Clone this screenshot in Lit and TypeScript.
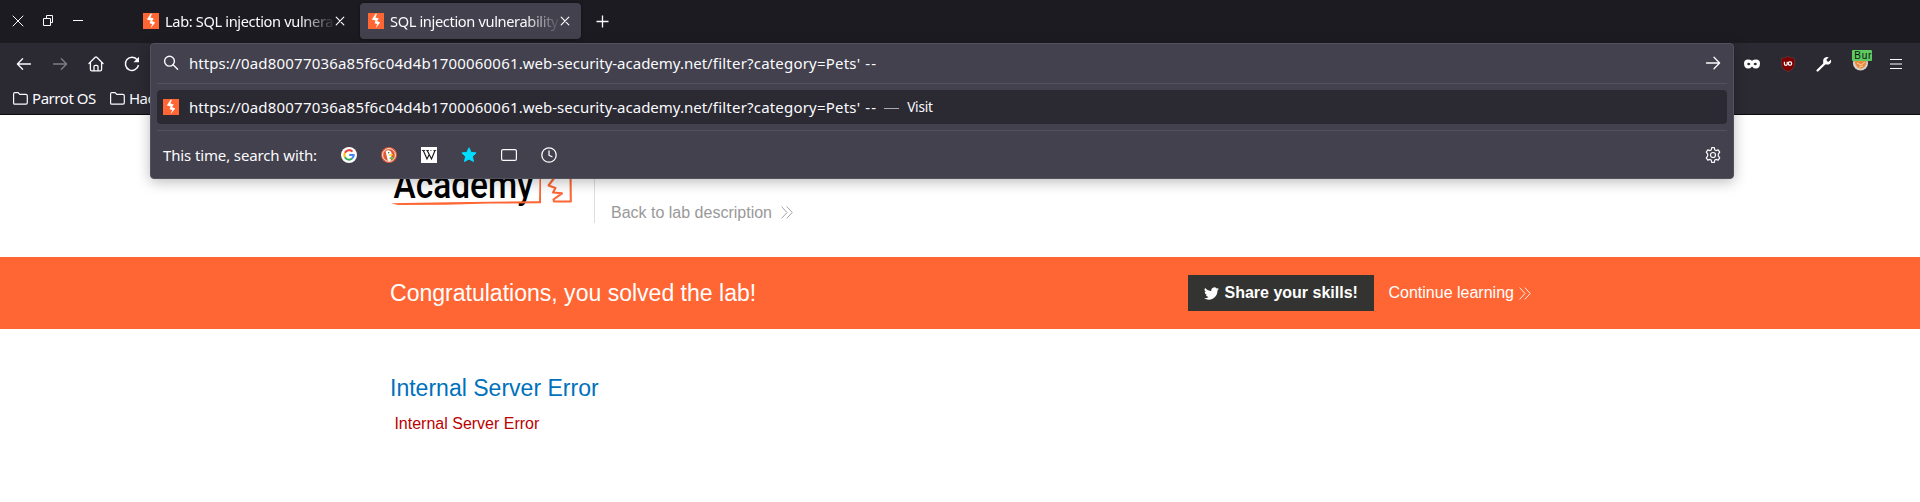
import { LitElement, html, css, svg } from "lit";
import { customElement, property } from "lit/decorators.js";

const stroke = (size: number, body: unknown, w = 1.3) => html`<svg width=${size} height=${size} viewBox="0 0 16 16" fill="none" stroke="currentColor" stroke-width=${w} stroke-linecap="round" stroke-linejoin="round">${body}</svg>`;

const bolt = html`<svg width="16" height="16" viewBox="0 0 16 16"><rect width="16" height="16" fill="#ff6633"/><path d="M7.6 0.8 3.8 6.4 7.6 7.6 6.6 10.2 9.2 11 7.6 15.2 12.2 9.4 9 8 10.8 5.4 7.4 4.6 9 0.8Z" fill="#fff"/></svg>`;
const closeX = stroke(16, svg`<path d="M4.2 4.2l7.6 7.6M11.8 4.2l-7.6 7.6"/>`, 1.2);
const chevrons = html`<svg class="chev" width="12" height="13" viewBox="0 0 12 13" fill="none" stroke="currentColor" stroke-width="0.9"><path d="M.6.6 6 6.5.6 12.4M5.8.6l5.4 5.9-5.4 5.9"/></svg>`;
const folder = html`<svg width="15" height="13" viewBox="0 0 15 13" fill="none" stroke="#fbfbfe" stroke-width="1.2"><path d="M.6 10.9V2Q.6.7 1.9.7h3.2l1.7 1.7h6Q14.3 2.4 14.3 3.8v7Q14.3 12.2 13 12.2H1.9Q.6 12.2.6 10.9Z"/></svg>`;

@customElement("browser-tab")
class BrowserTab extends LitElement {
  @property() label = "";
  @property({ type: Boolean, reflect: true }) active = false;
  static styles = css`
    :host { display: flex; align-items: center; box-sizing: border-box; width: 221px; height: 36px; padding-left: 8px; border-radius: 4px; }
    :host([active]) { background: #42414d; box-shadow: 0 0 3px #0008; }
    svg { display: block; flex: none; }
    .label { width: 169px; margin: 0 -2px 0 6px; overflow: hidden; white-space: nowrap; font-size: 14.6px; letter-spacing: -0.35px; line-height: 22px; -webkit-mask-image: linear-gradient(to right, #000 135px, transparent 171px); mask-image: linear-gradient(to right, #000 135px, transparent 171px); }
  `;
  render() {
    return html`${bolt}<span class="label">${this.label}</span>${closeX}`;
  }
}

@customElement("url-dropdown")
class UrlDropdown extends LitElement {
  static styles = css`
    :host { display: flex; flex-direction: column; box-sizing: border-box; width: 1584px; height: 136px; padding: 0 6px; background: #42414d; border: 1px solid #52525e; border-radius: 4px; box-shadow: 0 3px 14px #0004; }
    svg { display: block; flex: none; }
    .row { display: flex; align-items: center; box-sizing: border-box; padding: 0 6px; white-space: pre; }
    .entry { height: 40px; padding-bottom: 1px; border-bottom: 1px solid #52525e; }
    .hit { height: 34px; margin: 6px 0; background: #2b2a33; border-radius: 4px; }
    .engines { height: 48px; padding-top: 1px; border-top: 1px solid #52525e; }
    .url { margin-left: 10px; }
    .scheme { letter-spacing: 0.03px; }
    .lab-id { letter-spacing: 0.2px; }
    .host { letter-spacing: 0; }
    .path { letter-spacing: 0.2px; }
    .tail { letter-spacing: 1.1px; }
    .with { letter-spacing: -0.13px; }
    .fill { flex: 1; }
    .dash { width: 15px; height: 1px; margin: 3px 8px 0 7px; background: #aaaab2; }
    .visit { font-size: 13.6px; letter-spacing: -0.2px; }
    .list { display: flex; gap: 24px; margin-left: 24px; }
  `;
  render() {
    const url = html`<span class="url"><span class="scheme">https://</span><span class="lab-id">0ad80077036a85f6c04d4b1700060061</span><span class="host">.web-security-academy.net</span><span class="path">/filter?category=Pets'</span><span class="tail"> --</span></span>`;
    return html`
      <div class="row entry">
        ${stroke(16, svg`<circle cx="6.5" cy="6.2" r="4.9"/><path d="M10.1 9.8l4.5 4.5"/>`, 1.4)}
        ${url}<span class="fill"></span>
        ${stroke(16, svg`<path d="M1.5 8h13M9 2.3l5.6 5.7L9 13.7"/>`)}
      </div>
      <div class="row hit">${bolt}${url}<span class="dash"></span><span class="visit">Visit</span></div>
      <div class="row engines">
        <span class="with">This time, search with:</span>
        <div class="list">
          <svg width="16" height="16" viewBox="0 0 16 16"><circle cx="8" cy="8" r="8" fill="#fff"/><g fill="none" stroke-width="2"><path d="M11.5 4.6A4.7 4.7 0 0 0 3.9 5.7" stroke="#ea4335"/><path d="M3.9 5.7A4.7 4.7 0 0 0 3.9 10.3" stroke="#fbbc05"/><path d="M3.9 10.3A4.7 4.7 0 0 0 11 11.6" stroke="#34a853"/><path d="M11 11.6A4.7 4.7 0 0 0 12.7 8H8.2" stroke="#4285f4"/></g></svg>
          <svg width="16" height="16" viewBox="0 0 16 16"><circle cx="8" cy="8" r="8" fill="#de5833"/><circle cx="8" cy="8" r="6.4" fill="none" stroke="#fff" stroke-width=".9"/><path d="M4.600 4.200Q7.400 2.500 9.500 4.200 11 5.500 10.600 8L9.500 13.800Q8 14.200 6.800 13.600L5.200 7Z" fill="#fff"/><path d="M8 7.600q2-.9 4.400-.3-1 1.600-4 1.700Z" fill="#fdd20a"/><path d="M8.400 10.400l3.800-.6v2.800l-3.600-.8Z" fill="#65bc46"/><circle cx="7.700" cy="5.800" r=".7" fill="#33405e"/></svg>
          <svg width="16" height="16" viewBox="0 0 16 16"><rect width="16" height="16" fill="#fff"/><path d="M2.300 3.500 6 12 8.300 7.300M6.200 3.500l4.300 8.500L14 3.500" fill="none" stroke="#111" stroke-width="1.100"/><path d="M.8 3.500h3.400M5.200 3.500h2.800M9.400 3.500h1M12.400 3.500h2.800" stroke="#111" stroke-width=".8"/></svg>
          <svg width="16" height="16" viewBox="0 0 16 16"><path d="M8 .8l2.100 4.600 5 .5-3.700 3.500 1.100 5.100L8 12l-4.500 2.500 1.100-5.100L.9 5.900l5-.5Z" fill="#00ddff" stroke="#00ddff" stroke-linejoin="round"/></svg>
          <svg width="16" height="16" viewBox="0 0 16 16"><rect x=".6" y="2.600" width="14.800" height="10.800" rx="1.500" fill="none" stroke="#fbfbfe" stroke-width="1.200"/></svg>
          ${stroke(16, svg`<circle cx="8" cy="8" r="7.200"/><path d="M8 3.800v4.400l3 1.600"/>`)}
        </div>
        <span class="fill"></span>
        ${stroke(16, svg`<circle cx="8" cy="8" r="2.500"/><path d="M6.700.7h2.600l.5 2.200 1.200.7 2.200-.7 1.500 2.300-1.400 1.900v1.800l1.400 1.900-1.500 2.300-2.200-.7-1.200.7-.5 2.200H6.700l-.5-2.200-1.200-.7-2.200.7-1.500-2.300 1.400-1.900V7.100L1.300 5.200l1.500-2.300 2.200.7 1.200-.7Z"/>`, 1.2)}
      </div>`;
  }
}

@customElement("app-root")
class AppRoot extends LitElement {
  static styles = css`
    :host { display: block; position: relative; height: 502px; overflow: hidden; background: #fff; color: #fbfbfe; font: 15px/22px "Noto Sans", sans-serif; }
    svg { display: block; flex: none; }
    .titlebar { display: flex; box-sizing: border-box; height: 43px; padding: 3px 0 0 10px; background: #1c1b22; }
    .controls { display: flex; align-items: center; gap: 14px; width: 125px; height: 36px; }
    .tabs { display: flex; align-items: center; gap: 4px; height: 36px; }
    .plus { margin-left: 9px; }
    .toolbar { box-sizing: border-box; height: 72px; background: #2b2a33; border-bottom: 1px solid #0c0c0d; }
    .nav { display: flex; align-items: center; justify-content: space-between; height: 42px; padding: 0 16px; }
    .group { display: flex; align-items: center; gap: 20px; height: 41px; margin-bottom: 1px; }
    .burp { margin: 0 -4px 6px 0; }
    .dim { opacity: .4; }
    .marks { display: flex; align-items: center; height: 24px; margin-top: 1px; padding-left: 13px; white-space: nowrap; }
    .marks span { margin: 0 14px 0 4px; letter-spacing: -0.45px; }
    .dropdown { position: absolute; left: 150px; top: 43px; }
    .page { font-family: "Liberation Sans", Arial, sans-serif; }
    .header { display: flex; box-sizing: border-box; height: 142px; padding-left: 390px; }
    .logo { width: 204px; }
    .lab { box-sizing: border-box; height: 108px; padding: 87px 0 0 16px; border-left: 1px solid #ddd; }
    .back { display: flex; align-items: center; gap: 9px; color: #999; font-size: 16px; line-height: 21px; }
    .back .chev { margin-bottom: 1px; }
    .banner { display: flex; align-items: center; height: 72px; padding: 0 389px 0 390px; background: #ff6633; color: #fff; font-size: 16px; }
    .congrats { flex: 1; font-size: 23.04px; }
    .share { display: flex; align-items: center; gap: 5.500px; box-sizing: border-box; width: 186px; height: 36px; margin-right: 14.500px; padding-left: 16px; background: #333332; font-weight: bold; white-space: nowrap; }
    .more { display: flex; align-items: center; gap: 5px; width: 142.500px; white-space: nowrap; }
    h4 { margin: 0; padding: 46px 0 0 390px; color: #0071bc; font-size: 23.04px; line-height: 26px; font-weight: normal; }
    p { margin: 0; padding: 13px 0 0 394.400px; color: #b00; font-size: 16px; line-height: 20px; }
  `;
  render() {
    return html`
      <div class="titlebar">
        <div class="controls">
          ${stroke(16, svg`<path d="M3 3l10 10M13 3L3 13"/>`, 1)}
          <svg width="16" height="16" viewBox="0 0 16 16" fill="none" stroke="currentColor"><path d="M3.500 5.500h7v7h-7zM6.500 5.500v-3h6v7h-2"/></svg>
          <svg width="16" height="16" viewBox="0 0 16 16" stroke="currentColor"><path d="M3 7.500h10"/></svg>
        </div>
        <div class="tabs">
          <browser-tab label="Lab: SQL injection vulnera"></browser-tab>
          <browser-tab active label="SQL injection vulnerability"></browser-tab>
          <svg class="plus" width="16" height="16" viewBox="0 0 16 16" stroke="currentColor" stroke-width="1.300"><path d="M2.500 8.500h12M8.500 2.500v12"/></svg>
        </div>
      </div>
      <div class="toolbar">
        <div class="nav">
          <div class="group">
            ${stroke(16, svg`<path d="M14.500 8h-13M6.600 2.800L1.400 8l5.200 5.200"/>`)}
            <span class="dim">${stroke(16, svg`<path d="M1.500 8h13M9.400 2.800L14.600 8l-5.200 5.200"/>`)}</span>
            ${stroke(16, svg`<path d="M1 7.500L7.200 1.300q.8-.7 1.600 0L15 7.500M2.400 6.600v6.600q0 1.600 1.500 1.600h8.200q1.500 0 1.500-1.600V6.600M6 14.500v-4q0-1.200 1.200-1.200h1.600q1.200 0 1.200 1.200v4"/>`)}
            <svg width="16" height="16" viewBox="0 0 16 16"><path d="M13.400 4A6.600 6.600 0 1 0 14.500 9" fill="none" stroke="currentColor" stroke-width="1.400"/><path d="M15 .8v5.500H9.500Z" fill="currentColor"/></svg>
          </div>
          <div class="group">
            <svg width="16" height="10" viewBox="0 0 16 10"><path fill="#fff" fill-rule="evenodd" d="M4 .4Q6.500.4 8 1.700 9.500.4 12 .4 16 .4 16 4.600 15.800 9.600 12 9.600 9.700 9.600 8 7.400 6.300 9.600 4 9.600.2 9.600 0 4.600 0 .4 4 .4ZM3 5Q4.600 2.600 6.500 5 4.800 7.400 3 5ZM9.500 5Q11.400 2.600 13 5 11.200 7.400 9.500 5Z"/></svg>
            <svg width="16" height="16" viewBox="0 0 16 16"><path d="M8 .3Q10.500 2 14.700 2.300v5.500q0 5-6.700 7.900Q1.300 12.800 1.300 7.800V2.300Q5.500 2 8 .3Z" fill="#800000" stroke="#52484e" stroke-width=".6"/><path d="M4.400 5.700v2.200q0 1.400 1.500 1.400 1.300 0 1.300-1.400V5.700" fill="none" stroke="#fff" stroke-width="1.200"/><rect x="8.400" y="5.900" width="3.200" height="3.300" rx="1.200" fill="none" stroke="#fff" stroke-width="1.200"/></svg>
            <svg width="16" height="16" viewBox="0 0 16 16"><path d="M1.600 14.500 9.500 6.700" stroke="#fff" stroke-width="2.300" stroke-linecap="round"/><path d="M7.600 8.400Q6.200 3.500 8.700 1.700 10.500.4 12.800 1.300L10.500 3.600l.4 1.700 1.800.4L15 3.400q.8 2.700-1 4.300-1.800 1.400-4.400.6Z" fill="#fff"/></svg>
            <svg class="burp" width="20" height="22" viewBox="0 0 20 22"><circle cx="8.500" cy="13" r="7.600" fill="#d8cfc7"/><path d="M2.500 11Q4 19 9.500 18.500q4.500-1 5-7.500Z" fill="#e98a3e"/><path d="M5 13l4 2 4-3M7 17l4-1" stroke="#f7d0a1" fill="none"/><rect width="20" height="11" rx="1" fill="#5dca60"/><text x="2.300" y="9.300" font-family="Liberation Sans, sans-serif" font-size="10" textLength="17" fill="#111">Bur</text></svg>
            <svg width="16" height="16" viewBox="0 0 16 16" stroke="currentColor" stroke-width="1.200"><path d="M2 3.500h12M2 8h12M2 12.500h12"/></svg>
          </div>
        </div>
        <div class="marks">${folder}<span>Parrot OS</span>${folder}<span>Hac</span></div>
      </div>
      <div class="page">
        <div class="header">
          <div class="logo">
            <svg width="190" height="100" viewBox="0 0 190 100"><text x="3.500" y="83.400" font-family="Roboto, sans-serif" font-size="38" font-weight="500" textLength="140" lengthAdjust="spacingAndGlyphs" fill="#000">Academy</text><path fill="#ff6633" d="M1 88.300 60 87.300 149 86.200 149.700 55H151V88.200L100 88.600 55 89.800 8 90Z"/><path d="M180.500 55 180.800 86.500 164 86.500 163.500 84.500 172 78.300 163 77.500 165.500 73 158.500 70.500 168 58" fill="none" stroke="#ff6633" stroke-linejoin="round" stroke-width="2.100"/></svg>
          </div>
          <div class="lab"><div class="back">Back to lab description ${chevrons}</div></div>
        </div>
        <div class="banner">
          <span class="congrats">Congratulations, you solved the lab!</span>
          <div class="share"><svg width="15" height="15" viewBox="0 0 24 24"><path fill="#fff" d="M24 4.600a10 10 0 0 1-2.800.8 5 5 0 0 0 2.100-2.700 10 10 0 0 1-3.100 1.200 4.900 4.900 0 0 0-8.400 4.500A14 14 0 0 1 1.700 3.100a4.900 4.900 0 0 0 1.500 6.600 5 5 0 0 1-2.200-.6 4.900 4.900 0 0 0 3.900 4.900 5 5 0 0 1-2.200.1 4.900 4.900 0 0 0 4.600 3.400A10 10 0 0 1 0 19.500 14 14 0 0 0 21.500 7.100 10 10 0 0 0 24 4.600Z"/></svg>Share your skills!</div>
          <div class="more">Continue learning ${chevrons}</div>
        </div>
        <h4>Internal Server Error</h4>
        <p>Internal Server Error</p>
      </div>
      <url-dropdown class="dropdown"></url-dropdown>`;
  }
}
